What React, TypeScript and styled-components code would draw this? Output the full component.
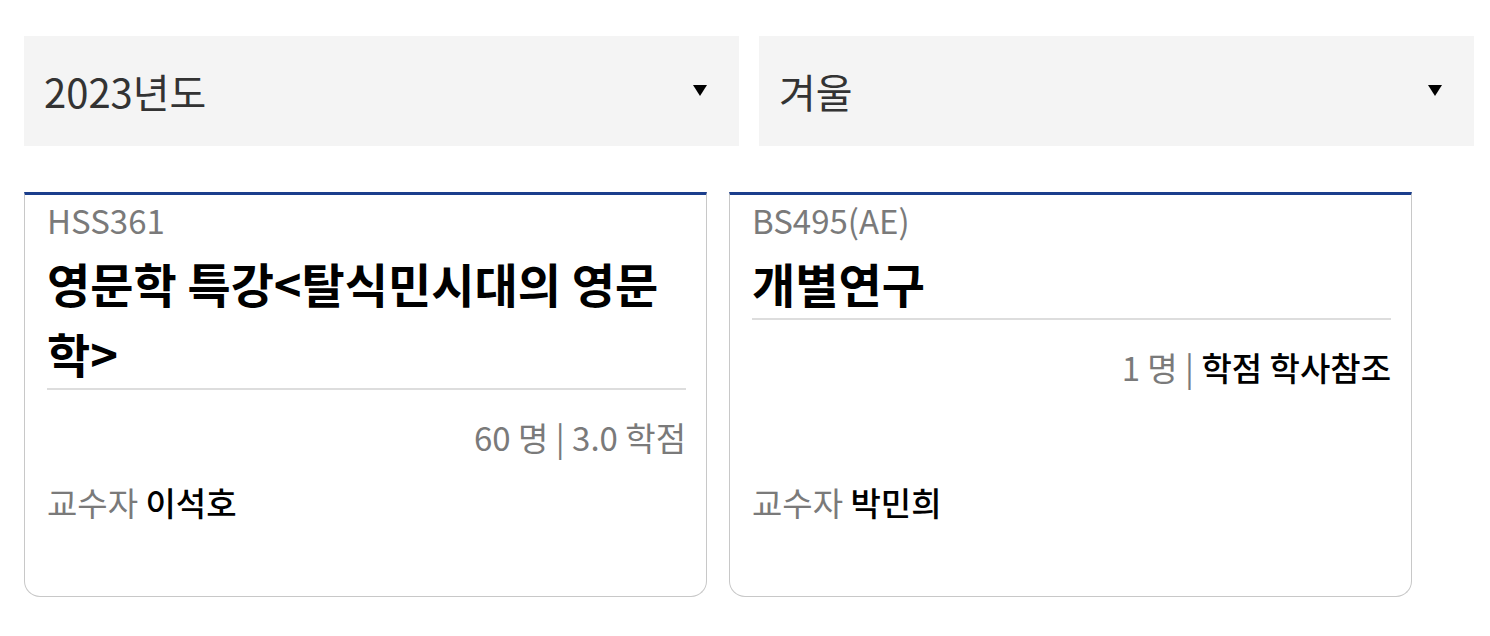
import styled, { createGlobalStyle } from 'styled-components';

interface Course {
  code: string;
  title: string;
  seats: string;
  credit: string;
  creditKnown: boolean;
  professor: string;
}

const courses: Course[] = [
  {
    code: 'HSS361',
    title: '영문학 특강<탈식민시대의 영문학>',
    seats: '60 명',
    credit: '3.0 학점',
    creditKnown: true,
    professor: '이석호',
  },
  {
    code: 'BS495(AE)',
    title: '개별연구',
    seats: '1 명',
    credit: '학점 학사참조',
    creditKnown: false,
    professor: '박민희',
  },
];

// --- STYLES ---

const GlobalStyle = createGlobalStyle`
  body {
    margin: 0;
    background: #fff;
    font-family: 'Noto Sans CJK KR', 'Noto Sans', sans-serif;
  }
`;

const Page = styled.main`
  padding: 36px 16px 0 24px;
`;

const Filters = styled.div`
  display: grid;
  grid-template-columns: 1fr 1fr;
  gap: 20px;
`;

const Select = styled.button`
  display: flex;
  align-items: center;
  justify-content: space-between;
  height: 110px;
  padding: 0 32px 0 20px;
  border: none;
  background: #f4f4f4;
  font-family: inherit;
  font-size: 40px;
  color: #333;
  text-align: left;
  cursor: pointer;
`;

/* small filled triangle */
const Caret = styled.span`
  width: 0;
  height: 0;
  margin-top: -2px;
  border-left: 7px solid transparent;
  border-right: 7px solid transparent;
  border-top: 11px solid #000;
`;

const CardGrid = styled.section`
  display: grid;
  grid-template-columns: repeat(2, 683px);
  gap: 22px;
  margin-top: 46px;
`;

const Card = styled.article`
  display: flex;
  flex-direction: column;
  box-sizing: border-box;
  height: 405px;
  padding: 4px 20px 73px 22px;
  border: 1px solid #c8c8c8;
  border-top: 3px solid #1b3e8c;
  border-radius: 0 0 16px 16px;
  background: #fff;
`;

const Code = styled.div`
  font-size: 33px;
  line-height: 42px;
  color: #7a7a7a;
`;

const Title = styled.h3`
  margin: 7px 0 0;
  border-bottom: 2px solid #ddd;
  font-size: 47px;
  font-weight: 700;
  line-height: 70px;
  color: #000;
`;

const Stats = styled.div`
  margin-top: 26px;
  text-align: right;
  font-size: 33px;
  line-height: 42px;
  color: #7a7a7a;
`;

const Credit = styled.span<{ $known: boolean }>`
  color: ${({ $known }) => ($known ? '#7a7a7a' : '#000')};
  font-weight: ${({ $known }) => ($known ? 400 : 500)};
`;

const Professor = styled.div`
  margin-top: auto;
  font-size: 33px;
  line-height: 42px;
  color: #7a7a7a;

  strong {
    font-weight: 500;
    color: #000;
  }
`;

// --- COMPONENT ---

export default function App() {
  return (
    <Page>
      <GlobalStyle />
      <Filters>
        <Select>
          2023년도
          <Caret />
        </Select>
        <Select>
          겨울
          <Caret />
        </Select>
      </Filters>

      <CardGrid>
        {courses.map((c) => (
          <Card key={c.code}>
            <Code>{c.code}</Code>
            <Title>{c.title}</Title>
            <Stats>
              {c.seats} | <Credit $known={c.creditKnown}>{c.credit}</Credit>
            </Stats>
            <Professor>
              교수자 <strong>{c.professor}</strong>
            </Professor>
          </Card>
        ))}
      </CardGrid>
    </Page>
  );
}
